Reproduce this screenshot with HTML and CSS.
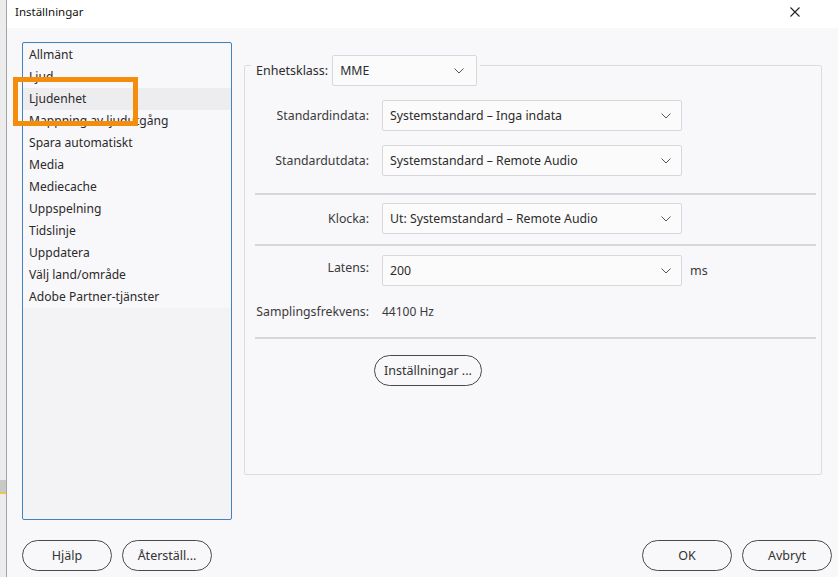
FILE: index.html
```html
<!DOCTYPE html>
<html lang="sv">
<head>
<meta charset="utf-8">
<title>Inställningar</title>
<link rel="stylesheet" href="styles.css">
</head>
<body>
<div class="frame">
  <div class="edge"><div class="edge-mark"></div></div>
  <div class="dialog">
    <div class="titlebar">
      <span class="title">Inställningar</span>
      <svg class="close" width="10" height="10" viewBox="0 0 10 10"><path d="M0.5 0.5 L9.5 9.5 M9.5 0.5 L0.5 9.5" stroke="#222" stroke-width="1.1" fill="none"/></svg>
    </div>
    <div class="content">
      <div class="main">
        <div class="listwrap">
          <ul class="list">
            <li>Allmänt</li>
            <li>Ljud</li>
            <li class="sel">Ljudenhet</li>
            <li>Mappning av ljudutgång</li>
            <li>Spara automatiskt</li>
            <li>Media</li>
            <li>Mediecache</li>
            <li>Uppspelning</li>
            <li>Tidslinje</li>
            <li>Uppdatera</li>
            <li>Välj land/område</li>
            <li>Adobe Partner-tjänster</li>
          </ul>
          <div class="highlight"></div>
        </div>
        <div class="group">
          <div class="legend">
            <span class="legend-label">Enhetsklass:</span>
            <div class="select small"><span>MME</span><svg class="chev" width="10" height="6" viewBox="0 0 10 6"><path d="M0.5 0.5 L5 5 L9.5 0.5" stroke="#555" stroke-width="1" fill="none"/></svg></div>
          </div>
          <div class="rows">
            <div class="row r1">
              <span class="label">Standardindata:</span>
              <div class="select"><span>Systemstandard – Inga indata</span><svg class="chev" width="10" height="6" viewBox="0 0 10 6"><path d="M0.5 0.5 L5 5 L9.5 0.5" stroke="#555" stroke-width="1" fill="none"/></svg></div>
            </div>
            <div class="row r2">
              <span class="label">Standardutdata:</span>
              <div class="select"><span>Systemstandard – Remote Audio</span><svg class="chev" width="10" height="6" viewBox="0 0 10 6"><path d="M0.5 0.5 L5 5 L9.5 0.5" stroke="#555" stroke-width="1" fill="none"/></svg></div>
            </div>
            <div class="sep s1"></div>
            <div class="row r3">
              <span class="label">Klocka:</span>
              <div class="select"><span>Ut: Systemstandard – Remote Audio</span><svg class="chev" width="10" height="6" viewBox="0 0 10 6"><path d="M0.5 0.5 L5 5 L9.5 0.5" stroke="#555" stroke-width="1" fill="none"/></svg></div>
            </div>
            <div class="sep s2"></div>
            <div class="row r4">
              <span class="label up">Latens:</span>
              <div class="select"><span>200</span><svg class="chev" width="10" height="6" viewBox="0 0 10 6"><path d="M0.5 0.5 L5 5 L9.5 0.5" stroke="#555" stroke-width="1" fill="none"/></svg></div>
              <span class="unit">ms</span>
            </div>
            <div class="row r5">
              <span class="label">Samplingsfrekvens:</span>
              <span class="value">44100 Hz</span>
            </div>
            <div class="sep s3"></div>
            <div class="row r6">
              <span class="label"></span>
              <button class="pill wide">Inställningar ...</button>
            </div>
          </div>
        </div>
      </div>
      <div class="footer">
        <div class="btns">
          <button class="pill">Hjälp</button>
          <button class="pill">Återställ...</button>
        </div>
        <div class="btns">
          <button class="pill">OK</button>
          <button class="pill">Avbryt</button>
        </div>
      </div>
    </div>
  </div>
</div>
</body>
</html>
```

FILE: styles.css
```css
* { box-sizing: border-box; }
html, body { margin: 0; padding: 0; }
body {
  width: 838px;
  height: 577px;
  overflow: hidden;
  background: #f8f7fa;
  font-family: "Noto Sans", "Open Sans", sans-serif;
  font-size: 12px;
  color: #2c2c2c;
}
.frame { display: flex; height: 577px; }
.edge {
  width: 7px;
  background: #ececec;
  border-right: 1px solid #a4a4a4;
  position: relative;
}
.edge-mark {
  position: absolute;
  left: 0; top: 480px;
  width: 6px; height: 14px;
  background: #c8c8c8;
  border-bottom: 2px solid #e6c84a;
}
.dialog { flex: 1; display: flex; flex-direction: column; }
.titlebar {
  height: 28px;
  background: #ffffff;
  display: flex;
  align-items: center;
  justify-content: space-between;
  padding: 0 38px 5px 8px;
}
.title { font-size: 11.5px; color: #111; }
.close { margin-top: 1px; }
.content { flex: 1; display: flex; flex-direction: column; padding: 14px 6px 6px 15px; }
.main { display: flex; gap: 12px; height: 478px; }
.listwrap { position: relative; width: 210px; height: 478px; }
.list {
  list-style: none;
  margin: 0;
  padding: 1px 0 0;
  height: 100%;
  border: 1px solid #4283bf;
  border-radius: 2px;
  background: #f3f3f5;
}
.list li {
  height: 22px;
  line-height: 22px;
  padding-left: 6px;
  background: #f8f7fa;
  white-space: nowrap;
  color: #2a2a2a;
  font-size: 12.1px;
}
.list li.sel { background: #ededf0; }
.highlight {
  position: absolute;
  left: -9px; top: 35px;
  width: 125px; height: 49px;
  border: 5px solid #f48c0c;
}
.group {
  width: 578px;
  height: 410px;
  margin-top: 23px;
  border: 1px solid #dcdce0;
  border-radius: 2px;
  padding: 0 0 0 10px;
}
.legend {
  display: flex;
  align-items: center;
  gap: 4px;
  margin-top: -11px;
  margin-left: -4px;
  padding: 0 3px 0 5px;
  width: max-content;
  background: #f8f7fa;
}
.legend-label { color: #2c2c2c; font-size: 12.5px; }
.select {
  width: 300px;
  height: 31px;
  border: 1px solid #d8d8dc;
  border-radius: 2px;
  background: #fbfbfc;
  display: flex;
  align-items: center;
  justify-content: space-between;
  padding: 0 10px 0 7px;
  white-space: nowrap;
  font-size: 12.3px;
}
.select.small { width: 145px; padding-right: 12px; }
.rows { display: flex; flex-direction: column; }
.row { display: flex; align-items: center; gap: 13px; }
.r1 { margin-top: 14px; }
.r2 { margin-top: 14px; }
.s1 { margin-top: 17px; }
.r3 { margin-top: 8px; }
.s2 { margin-top: 10px; }
.r4 { margin-top: 9px; }
.r5 { margin-top: 16px; height: 18px; }
.s3 { margin-top: 17px; }
.r6 { margin-top: 16px; gap: 5px; }
.label { width: 114px; text-align: right; white-space: nowrap; color: #3a3a3a; font-size: 12.3px; }
.label.up { margin-top: -6px; }
.unit { margin-left: -5px; color: #3a3a3a; font-size: 12.5px; }
.value { color: #3a3a3a; font-size: 12px; }
.sep { height: 2px; background: #d6d6da; width: 561px; }
.pill {
  height: 31px;
  width: 90px;
  border: 1px solid #4a4a4a;
  border-radius: 16px;
  background: transparent;
  font-family: inherit;
  font-size: 12.5px;
  color: #333;
  padding: 0;
}
.pill.wide { width: 108px; }
.footer { display: flex; justify-content: space-between; margin-top: 20px; }
.btns { display: flex; gap: 10px; }
```
